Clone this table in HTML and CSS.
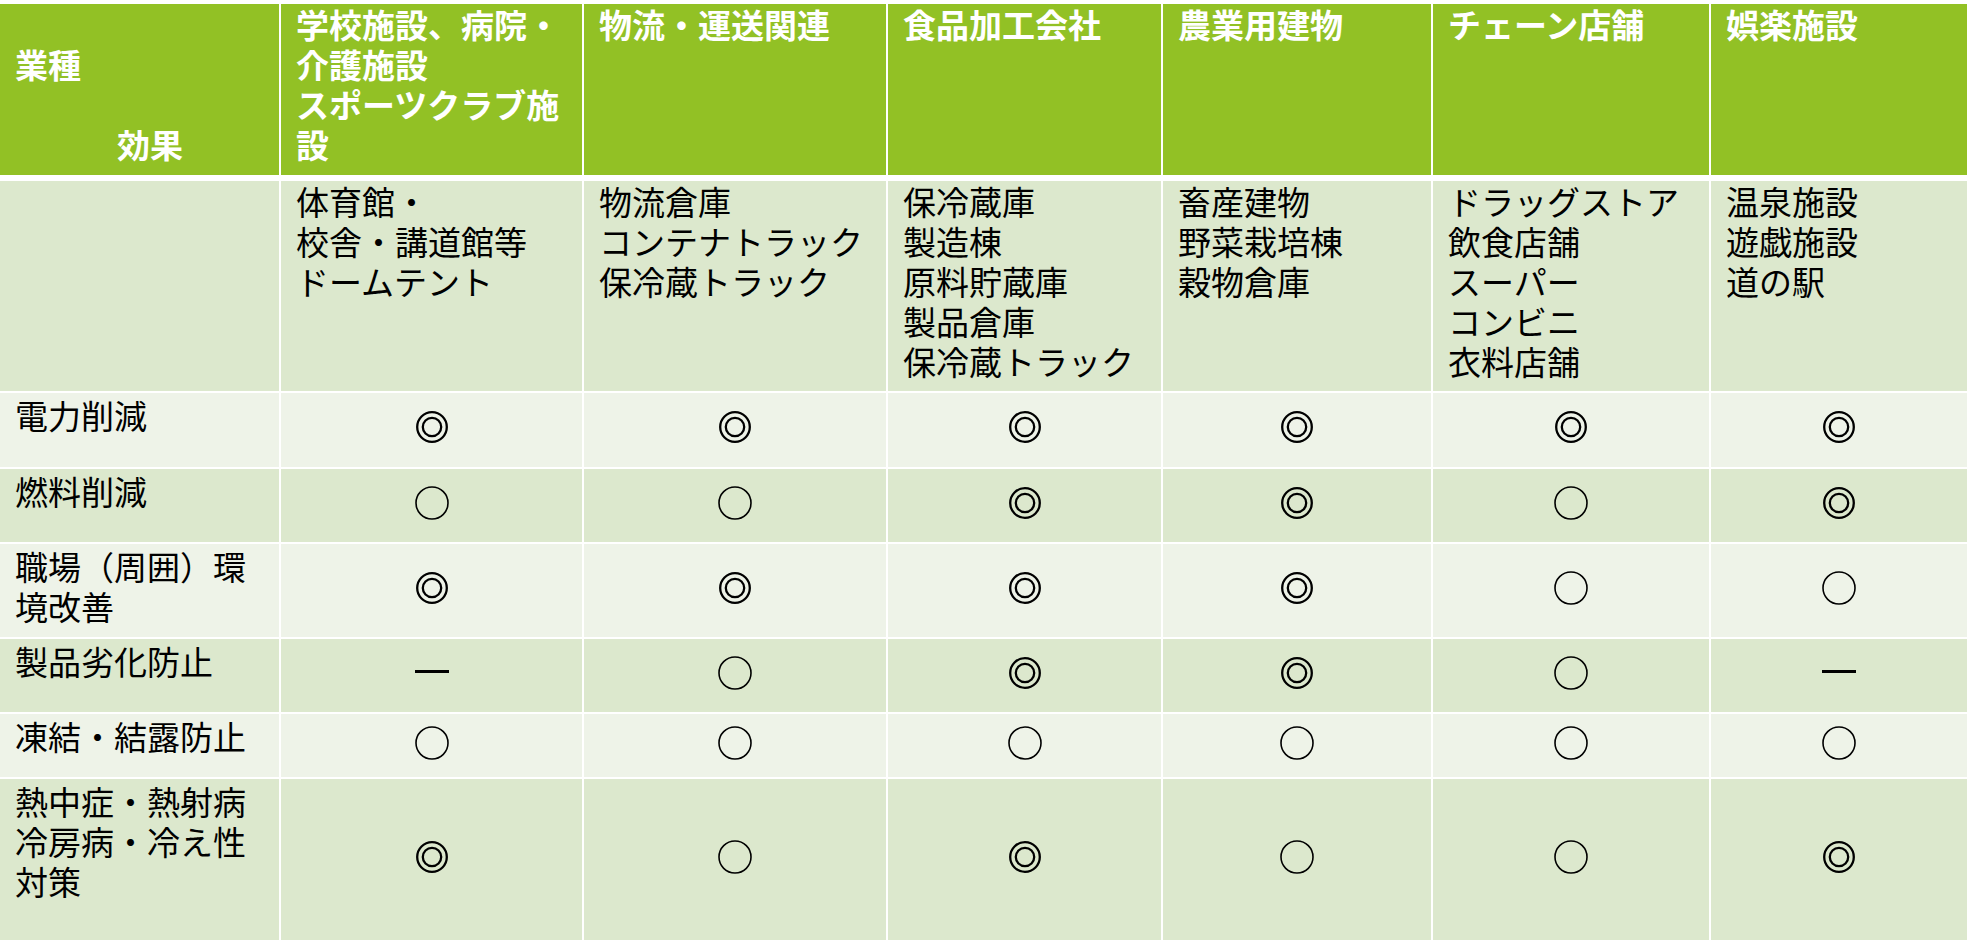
FILE: index.html
```html
<!DOCTYPE html>
<html lang="ja">
<head>
<meta charset="utf-8">
<title>業種別効果一覧</title>
<link rel="stylesheet" href="styles.css">
</head>
<body>
<div class="table">
  <!-- header -->
  <div class="cell head"><br>業種<br><br><span class="indent">効果</span></div>
  <div class="cell head">学校施設、病院・<br>介護施設<br>スポーツクラブ施<br>設</div>
  <div class="cell head">物流・運送関連</div>
  <div class="cell head">食品加工会社</div>
  <div class="cell head">農業用建物</div>
  <div class="cell head">チェーン店舗</div>
  <div class="cell head">娯楽施設</div>

  <!-- description row -->
  <div class="cell dark desc"></div>
  <div class="cell dark desc">体育館・<br>校舎・講道館等<br>ドームテント</div>
  <div class="cell dark desc">物流倉庫<br>コンテナトラック<br>保冷蔵トラック</div>
  <div class="cell dark desc">保冷蔵庫<br>製造棟<br>原料貯蔵庫<br>製品倉庫<br>保冷蔵トラック</div>
  <div class="cell dark desc">畜産建物<br>野菜栽培棟<br>穀物倉庫</div>
  <div class="cell dark desc">ドラッグストア<br>飲食店舗<br>スーパー<br>コンビニ<br>衣料店舗</div>
  <div class="cell dark desc">温泉施設<br>遊戯施設<br>道の駅</div>

  <!-- 電力削減 -->
  <div class="cell light label">電力削減</div>
  <div class="cell light mark"><svg class="dbl" viewBox="0 0 32 32"><circle cx="16" cy="16" r="14.8"/><circle cx="16" cy="16" r="9.2"/></svg></div>
  <div class="cell light mark"><svg class="dbl" viewBox="0 0 32 32"><circle cx="16" cy="16" r="14.8"/><circle cx="16" cy="16" r="9.2"/></svg></div>
  <div class="cell light mark"><svg class="dbl" viewBox="0 0 32 32"><circle cx="16" cy="16" r="14.8"/><circle cx="16" cy="16" r="9.2"/></svg></div>
  <div class="cell light mark"><svg class="dbl" viewBox="0 0 32 32"><circle cx="16" cy="16" r="14.8"/><circle cx="16" cy="16" r="9.2"/></svg></div>
  <div class="cell light mark"><svg class="dbl" viewBox="0 0 32 32"><circle cx="16" cy="16" r="14.8"/><circle cx="16" cy="16" r="9.2"/></svg></div>
  <div class="cell light mark"><svg class="dbl" viewBox="0 0 32 32"><circle cx="16" cy="16" r="14.8"/><circle cx="16" cy="16" r="9.2"/></svg></div>

  <!-- 燃料削減 -->
  <div class="cell dark label">燃料削減</div>
  <div class="cell dark mark"><svg class="sgl" viewBox="0 0 34 34"><circle cx="17" cy="17" r="16"/></svg></div>
  <div class="cell dark mark"><svg class="sgl" viewBox="0 0 34 34"><circle cx="17" cy="17" r="16"/></svg></div>
  <div class="cell dark mark"><svg class="dbl" viewBox="0 0 32 32"><circle cx="16" cy="16" r="14.8"/><circle cx="16" cy="16" r="9.2"/></svg></div>
  <div class="cell dark mark"><svg class="dbl" viewBox="0 0 32 32"><circle cx="16" cy="16" r="14.8"/><circle cx="16" cy="16" r="9.2"/></svg></div>
  <div class="cell dark mark"><svg class="sgl" viewBox="0 0 34 34"><circle cx="17" cy="17" r="16"/></svg></div>
  <div class="cell dark mark"><svg class="dbl" viewBox="0 0 32 32"><circle cx="16" cy="16" r="14.8"/><circle cx="16" cy="16" r="9.2"/></svg></div>

  <!-- 職場（周囲）環境改善 -->
  <div class="cell light label">職場（周囲）環<br>境改善</div>
  <div class="cell light mark"><svg class="dbl" viewBox="0 0 32 32"><circle cx="16" cy="16" r="14.8"/><circle cx="16" cy="16" r="9.2"/></svg></div>
  <div class="cell light mark"><svg class="dbl" viewBox="0 0 32 32"><circle cx="16" cy="16" r="14.8"/><circle cx="16" cy="16" r="9.2"/></svg></div>
  <div class="cell light mark"><svg class="dbl" viewBox="0 0 32 32"><circle cx="16" cy="16" r="14.8"/><circle cx="16" cy="16" r="9.2"/></svg></div>
  <div class="cell light mark"><svg class="dbl" viewBox="0 0 32 32"><circle cx="16" cy="16" r="14.8"/><circle cx="16" cy="16" r="9.2"/></svg></div>
  <div class="cell light mark"><svg class="sgl" viewBox="0 0 34 34"><circle cx="17" cy="17" r="16"/></svg></div>
  <div class="cell light mark"><svg class="sgl" viewBox="0 0 34 34"><circle cx="17" cy="17" r="16"/></svg></div>

  <!-- 製品劣化防止 -->
  <div class="cell dark label">製品劣化防止</div>
  <div class="cell dark mark"><span class="dash"></span></div>
  <div class="cell dark mark"><svg class="sgl" viewBox="0 0 34 34"><circle cx="17" cy="17" r="16"/></svg></div>
  <div class="cell dark mark"><svg class="dbl" viewBox="0 0 32 32"><circle cx="16" cy="16" r="14.8"/><circle cx="16" cy="16" r="9.2"/></svg></div>
  <div class="cell dark mark"><svg class="dbl" viewBox="0 0 32 32"><circle cx="16" cy="16" r="14.8"/><circle cx="16" cy="16" r="9.2"/></svg></div>
  <div class="cell dark mark"><svg class="sgl" viewBox="0 0 34 34"><circle cx="17" cy="17" r="16"/></svg></div>
  <div class="cell dark mark"><span class="dash"></span></div>

  <!-- 凍結・結露防止 -->
  <div class="cell light label">凍結・結露防止</div>
  <div class="cell light mark"><svg class="sgl" viewBox="0 0 34 34"><circle cx="17" cy="17" r="16"/></svg></div>
  <div class="cell light mark"><svg class="sgl" viewBox="0 0 34 34"><circle cx="17" cy="17" r="16"/></svg></div>
  <div class="cell light mark"><svg class="sgl" viewBox="0 0 34 34"><circle cx="17" cy="17" r="16"/></svg></div>
  <div class="cell light mark"><svg class="sgl" viewBox="0 0 34 34"><circle cx="17" cy="17" r="16"/></svg></div>
  <div class="cell light mark"><svg class="sgl" viewBox="0 0 34 34"><circle cx="17" cy="17" r="16"/></svg></div>
  <div class="cell light mark"><svg class="sgl" viewBox="0 0 34 34"><circle cx="17" cy="17" r="16"/></svg></div>

  <!-- 熱中症・熱射病 冷房病・冷え性 対策 -->
  <div class="cell dark label">熱中症・熱射病<br>冷房病・冷え性<br>対策</div>
  <div class="cell dark mark"><svg class="dbl" viewBox="0 0 32 32"><circle cx="16" cy="16" r="14.8"/><circle cx="16" cy="16" r="9.2"/></svg></div>
  <div class="cell dark mark"><svg class="sgl" viewBox="0 0 34 34"><circle cx="17" cy="17" r="16"/></svg></div>
  <div class="cell dark mark"><svg class="dbl" viewBox="0 0 32 32"><circle cx="16" cy="16" r="14.8"/><circle cx="16" cy="16" r="9.2"/></svg></div>
  <div class="cell dark mark"><svg class="sgl" viewBox="0 0 34 34"><circle cx="17" cy="17" r="16"/></svg></div>
  <div class="cell dark mark"><svg class="sgl" viewBox="0 0 34 34"><circle cx="17" cy="17" r="16"/></svg></div>
  <div class="cell dark mark"><svg class="dbl" viewBox="0 0 32 32"><circle cx="16" cy="16" r="14.8"/><circle cx="16" cy="16" r="9.2"/></svg></div>
</div>
</body>
</html>
```

FILE: styles.css
```css
html, body {
  margin: 0;
  padding: 0;
  background: #ffffff;
}

body {
  padding-top: 4px;
  font-family: "Noto Sans CJK JP", "Noto Sans", sans-serif;
  font-size: 33px;
  line-height: 40px;
  color: #000000;
}

.table {
  display: grid;
  width: 1967px;
  grid-template-columns: 279px 301px 302px 273px 268px 276px 256px;
  grid-template-rows: 175px 210px 74px 73px 93px 73px 63px 161px;
  column-gap: 2px;
  row-gap: 2px;
}

.cell {
  box-sizing: border-box;
  padding: 0 10px 0 15px;
  white-space: nowrap;
}

.head {
  background: #92c125;
  background-clip: padding-box;
  border-bottom: 4px solid #ffffff;
  color: #ffffff;
  font-weight: 700;
  padding-top: 0;
}

.indent {
  margin-left: 102px;
}

.dark {
  background: #dce8cd;
}

.light {
  background: #eef3e8;
}

.desc {
  padding-top: 0;
}

.label {
  padding-top: 2px;
}

.mark {
  display: flex;
  align-items: center;
  justify-content: center;
  padding: 0 0 6px 0;
}

.mark svg {
  display: block;
  fill: none;
  stroke: #000000;
}

.dbl {
  width: 32px;
  height: 32px;
  stroke-width: 2.3;
}

.sgl {
  width: 34px;
  height: 34px;
  stroke-width: 1.6;
}

.dash {
  display: block;
  width: 34px;
  height: 3px;
  background: #000000;
  margin-top: -2px;
}
```
